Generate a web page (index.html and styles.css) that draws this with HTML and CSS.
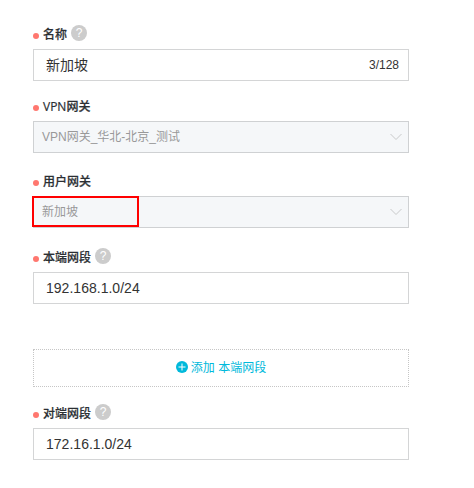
FILE: index.html
```html
<!DOCTYPE html>
<html lang="zh-CN">
<head>
<meta charset="utf-8">
<title>VPN</title>
<link rel="stylesheet" href="styles.css">
</head>
<body>
<form class="form">
  <div class="field field-name">
    <div class="label"><i class="dot"></i><span class="label-text">名称</span><span class="help">?</span></div>
    <div class="control"><span class="value">新加坡</span><span class="count">3/128</span></div>
  </div>
  <div class="field field-vpn">
    <div class="label"><i class="dot"></i><span class="label-text">VPN网关</span></div>
    <div class="control select"><span>VPN网关_华北-北京_测试</span><svg class="arrow" width="12" height="8" viewBox="0 0 12 8"><path d="M.5 1 6 6.5 11.5 1"/></svg></div>
  </div>
  <div class="field field-user">
    <div class="label"><i class="dot"></i><span class="label-text">用户网关</span></div>
    <div class="control select"><span>新加坡</span><svg class="arrow" width="12" height="8" viewBox="0 0 12 8"><path d="M.5 1 6 6.5 11.5 1"/></svg><i class="highlight"></i></div>
  </div>
  <div class="field field-local">
    <div class="label"><i class="dot"></i><span class="label-text">本端网段</span><span class="help">?</span></div>
    <div class="control"><span class="value address">192.168.1.0/24</span></div>
  </div>
  <div class="add"><svg width="12" height="12" viewBox="0 0 12 12"><circle cx="6" cy="6" r="6"/><path d="M6 2.5v7M2.5 6h7"/></svg><span>添加 本端网段</span></div>
  <div class="field">
    <div class="label"><i class="dot"></i><span class="label-text">对端网段</span><span class="help">?</span></div>
    <div class="control"><span class="value address">172.16.1.0/24</span></div>
  </div>
</form>
</body>
</html>
```
FILE: styles.css
```css
* { box-sizing: border-box; }
body {
  margin: 0;
  background: #fff;
  color: #333;
  font: 12px/20px "Liberation Sans", "Noto Sans CJK SC", sans-serif;
}
.form { width: 376px; margin: 24px 0 0 33px; }
.field-name { margin-bottom: 15px; }
.field-vpn { margin-bottom: 18px; }
.field-user { margin-bottom: 19px; }
.field-local { margin-bottom: 45px; }
.label {
  display: flex;
  align-items: center;
  height: 20px;
  margin-bottom: 5px;
}
.dot {
  width: 6px;
  height: 6px;
  margin: 4px 4px 0 0;
  border-radius: 50%;
  background: #ff776f;
}
.label-text {
  padding-top: 2px;
  font-family: "Open Sans", "Noto Sans CJK SC", sans-serif;
  font-weight: 500;
  color: #2b2f33;
  -webkit-text-stroke: .2px #2b2f33;
}
.help {
  width: 16px;
  height: 16px;
  margin: 0 0 2px 4px;
  border-radius: 50%;
  background: #ccc;
  color: #fff;
  font: 12px/16px "Liberation Sans", sans-serif;
  text-align: center;
}
.control {
  position: relative;
  display: flex;
  align-items: center;
  justify-content: space-between;
  height: 32px;
  padding: 0 9px 0 12px;
  border: 1px solid #d4d5d6;
}
.value { font-size: 14px; }
.address { letter-spacing: .02px; }
.count { font-size: 12px; }
.select {
  padding: 0 6px 0 8px;
  background: #f5f7f9;
  border-color: #cfd1d3;
  color: #999;
}
.arrow { fill: none; stroke: #c8c9ca; stroke-width: 1; }
.highlight {
  position: absolute;
  left: -2px;
  top: -1px;
  width: 107px;
  height: 31px;
  border: 2px solid #f00;
}
.add {
  display: flex;
  align-items: center;
  justify-content: center;
  gap: 3px;
  height: 38px;
  margin-bottom: 16px;
  border: 1px dotted #c6c6c6;
  color: #00b9db;
}
.add svg { margin-bottom: 2px; fill: #00b9db; stroke: #fff; stroke-width: 1; }
.add circle { stroke: none; }
.add path { fill: none; }
```
